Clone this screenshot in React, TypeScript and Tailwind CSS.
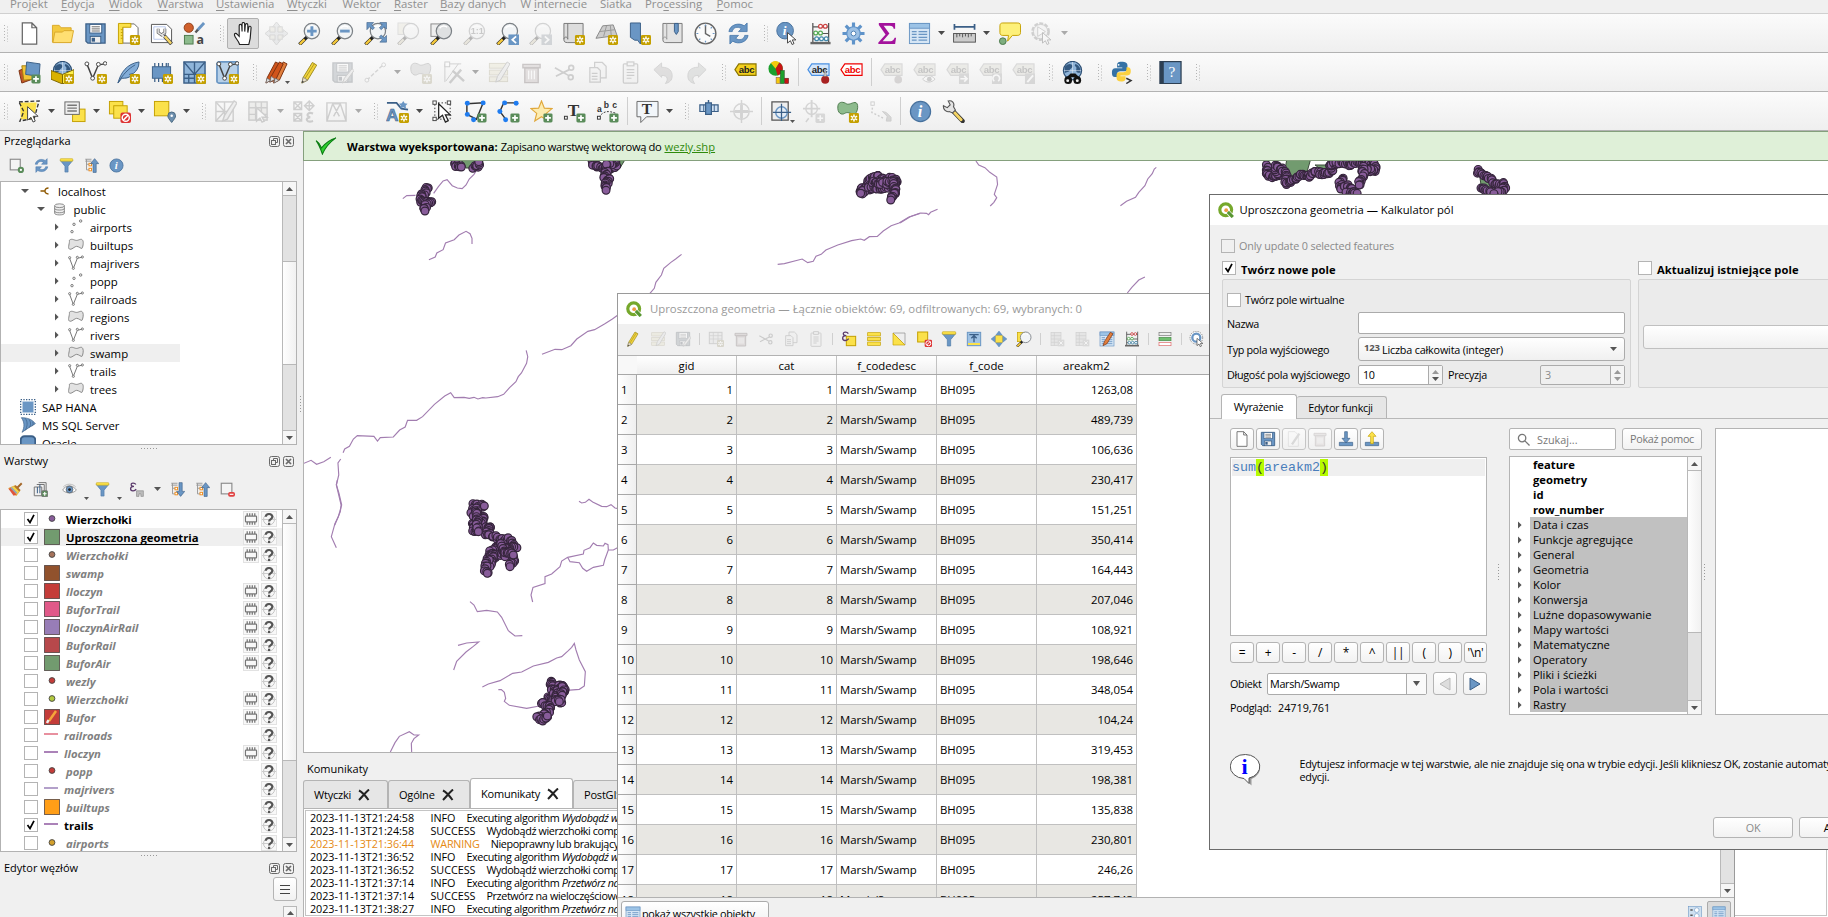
import React from 'react';

const B = '#6a96c4';
const DB = '#3b5f87';
const Y = '#fbe14a';
const DY = '#c4a000';

const Star = () => (
  <g>
    <rect x="13.5" y="13.5" width="10.5" height="10.5" rx="1.5" fill={DY} />
    <path d="M18.75 15v7.5M15.5 16.9l6.5 3.8M22 16.9l-6.5 3.8" stroke="#fff" strokeWidth="1.6" />
    <circle cx="18.75" cy="18.75" r="1" fill={DY} />
  </g>
);
const Plus = () => (
  <g>
    <rect x="14" y="14" width="9.5" height="9.5" rx="1.5" fill="#5a8c5a" />
    <path d="M18.75 15.8v6M15.8 18.75h6" stroke="#fff" strokeWidth="1.8" />
  </g>
);
const Lens = ({ fill = '#f1f4f6' }: { fill?: string }) => (
  <g>
    <path d="M1.500 23.500l8-8" stroke="#222" strokeWidth="3.6" />
    <path d="M1.900 23.100l5-5" stroke="#f5c93b" strokeWidth="2.4" />
    <circle cx="14.5" cy="9.5" r="8" fill={fill} stroke="#7b8085" strokeWidth="1.3" />
    <path d="M10 6.5c2-3 6-3 8-1" stroke="#fff" strokeWidth="1.5" fill="none" />
  </g>
);
const Cursor = () => <path d="M12 11v11l3-2.5 1.8 4 2-1-1.8-3.8h3.8z" fill="#fff" stroke="#444" strokeWidth="1" />;
const Pencil = ({ c = '#f2d43c', d = '#9d8a1d' }: { c?: string; d?: string }) => (
  <g>
    <path d="M4 23l1.500-6L15 1.500l4.500 2.800L10 20z" fill={c} stroke={d} />
    <path d="M4 23l1.500-6 4.500 3z" fill="#eadfc9" stroke="#777" strokeWidth=".8" />
    <path d="M4 23l.6-2.300 1.600 1z" fill="#333" />
    <path d="M7.500 18L17 2.800" stroke={d} strokeWidth=".8" />
  </g>
);
const Tag = ({ f, s, t }: { f: string; s: string; t: string }) => (
  <g>
    <path d="M1 9l4-6h18v12H5z" fill={f} stroke={s} strokeWidth="1.2" />
    <text x="5" y="12.300" fontSize="10" fontWeight="700" fontFamily="Liberation Sans, sans-serif" textLength="16.500" fill={t}>abc</text>
  </g>
);
const Rows = () => (
  <g fill={Y} stroke={DY}>
    <rect x="2.5" y="2.5" width="19" height="5" />
    <rect x="2.5" y="9.5" width="19" height="5" />
    <rect x="2.5" y="16.5" width="19" height="5" />
  </g>
);
const Trash = () => (
  <g fill="#d8a3a3" stroke="#8c5050" strokeWidth="1.4">
    <path d="M5 7h14v15.500H5z" />
    <path d="M3 3.500h18V7H3z" />
    <path d="M9 10v9M12 10v9M15 10v9" stroke="#fff" />
  </g>
);
const Disk = () => (
  <g>
    <path d="M2 2h20v20H4l-2-2z" fill={B} stroke={DB} strokeWidth="1.3" />
    <rect x="6" y="2.500" width="12.500" height="9" fill="#fff" stroke={DB} />
    <path d="M8 5h8.500M8 7.200h8.500M8 9.400h8.500" stroke="#666" strokeWidth="1" />
    <rect x="6.500" y="15" width="11" height="7" fill="#eee" stroke={DB} />
    <rect x="8" y="16.500" width="3.500" height="4" fill={DB} />
  </g>
);
const Globe = () => (
  <g>
    <circle cx="12" cy="10" r="9.5" fill="#8fb4d9" stroke="#2b4d72" strokeWidth="1.3" />
    <path d="M4 6c4-4 7-3 8-1s-3 3-3 5-4 1-5 3zM15 3c4 1 6 5 5 9-3 1-5-1-4-4s-3-2-1-5z" fill="#33587f" />
    <path d="M3 10h18M12 1v18" stroke="#dfe9f3" strokeWidth=".6" />
  </g>
);
const Refresh = () => (
  <g fill={B} stroke="#4273a8" strokeWidth=".8">
    <path d="M2 10C3 3 12 0 18 4l3-3v9h-9l3-3c-4-3-9-1-9.500 3z" />
    <path d="M22 14c-1 7-10 10-16 6l-3 3v-9h9l-3 3c4 3 9 1 9.500-3z" />
  </g>
);
const Funnel = () => (
  <g>
    <path d="M2 4h20l-7.500 9v9.500h-5V13z" fill={B} stroke="#4d7aa8" />
    <rect x="2" y="1" width="20" height="4" rx="1" fill={Y} stroke={DY} strokeWidth=".8" />
  </g>
);
const Abacus = () => (
  <g strokeWidth="1.300" fill="none">
    <path d="M4 1v20M20.500 1v20M4 5h16.500M4 12h16.500M4 17.500h16.500" stroke="#555" />
    <path d="M1.500 22h21" stroke="#666" strokeWidth="2.500" />
    <g fill="#fff" stroke="#c44">
      <circle cx="12" cy="4.500" r="2" /><circle cx="17" cy="4.500" r="2" />
    </g>
    <g fill="#fff" stroke="#5a5"><circle cx="7" cy="11.500" r="2" /><circle cx="12" cy="11.500" r="2" /></g>
    <g fill="#fff" stroke="#48a"><circle cx="8" cy="17.500" r="2" /><circle cx="13" cy="17.500" r="2" /><circle cx="18" cy="17.500" r="2" /></g>
  </g>
);
const Info = () => (
  <g>
    <circle cx="12" cy="12" r="10.500" fill={B} stroke="#47719d" strokeWidth="1.300" />
    <text x="9" y="18" fontSize="17" fontStyle="italic" fontWeight="700" fontFamily="Liberation Serif, serif" fill="#fff">i</text>
  </g>
);
const Clip = () => (
  <g fill="#eee" stroke="#777" strokeWidth="1.300">
    <rect x="4.500" y="3" width="15" height="20" rx="1" /><rect x="8.500" y="1" width="7" height="4" />
    <path d="M8 9h8M8 12h8M8 15h8M8 18h5" />
  </g>
);
const Copy = () => (
  <g fill="#eee" stroke="#777" strokeWidth="1.300">
    <path d="M9 1.500h8l4 4v12H9z" /><path d="M4 7h8l3 3v12H4z" /><path d="M6 13h6M6 16h6M6 19h6" />
  </g>
);
const Scissors = () => (
  <g fill="none" stroke="#777" strokeWidth="1.800">
    <path d="M2 7l14 8M3 16L17 9" /><circle cx="19" cy="7" r="2.500" /><circle cx="18.500" cy="17" r="2.500" />
  </g>
);
const Poly = () => (
  <path d="M2 6c1-5 6-4 9-2s9-4 11 0-1 12-4 11-6-3-9-1-8 0-7-8z" />
);
const Expr = () => <path d="M11 4C9 .500 3 1 3.500 4.500c.3 2 2.500 2.500 4.500 2.500-3 0-5.500 1-5.500 3.800C2.500 15 9 15.500 11.500 11.500" fill="none" stroke="#5b3a6b" strokeWidth="2" />;
const NoEntry = () => (
  <g><rect x="13" y="13" width="11" height="11" rx="2" fill="#d33" /><circle cx="18.500" cy="18.500" r="3.700" fill="none" stroke="#fff" strokeWidth="1.500" /><path d="M16 21l5-5" stroke="#fff" strokeWidth="1.500" /></g>
);
const VLine = () => (
  <g>
    <path d="M3 3l6 15 6-14 7-1" fill="none" stroke="#444" strokeWidth="1.500" />
    <g fill="#fff" stroke="#444"><circle cx="3" cy="3" r="2" /><circle cx="9" cy="18" r="2" /><circle cx="15" cy="3.500" r="2" /><circle cx="22" cy="2.500" r="1.800" /></g>
  </g>
);
const Table = () => (
  <g fill="#d6e6f5" stroke={B}>
    <rect x="1.500" y="1.500" width="21" height="21" /><rect x="1.500" y="1.500" width="21" height="5" fill="#9cc3e6" />
    <path d="M4 10h5M4 13h5M4 16h5M4 19h5M11 10h9M11 13h9M11 16h9M11 19h9" strokeWidth="1.300" />
  </g>
);
const TreeGlyph = () => (
  <g fill="none" strokeWidth="1.500">
    <path d="M2 2h10M4 2v17h5M4 10h5M2 5h10" stroke="#999" />
    <rect x="8" y="8.500" width="4" height="4" stroke="#f08c1a" fill="#fff" /><rect x="8" y="16.500" width="4" height="4" stroke="#f08c1a" fill="#fff" />
  </g>
);

const icons: Record<string, React.ReactNode> = {
  new: <path d="M4.500 1h10l5 5v17h-15zM14.500 1v5h5" fill="#fff" stroke="#666" strokeWidth="1.300" />,
  open: <g stroke="#d9a92c" strokeWidth="1"><path d="M1.500 3.500h7l2 2.500h10.500V21H1.500z" fill="#f3c93f" /><path d="M2 21.500L4 10.500h8l1.500-1.500H23.500L21 21.500z" fill="#ffdf72" /></g>,
  save: <Disk />,
  layout: <g><path d="M6 2h12l4 4v16H6z" fill="#fff" stroke="#666" /><path d="M1.500 1.500h13v4H6v17H1.500z" fill={Y} stroke={DY} /><path d="M4 8h2M4 11h2M4 14h2M4 17h2" stroke={DY} /><Star /></g>,
  layoutmgr: <g><path d="M1.500 2.500h16l5 5v14h-21z" fill="#fff" stroke="#555" /><path d="M4 5h12v13H4z" fill="none" stroke="#b8c8ec" /><path d="M14.500 14l8 9" stroke="#444" strokeWidth="4" /><path d="M15.500 15l6.500 7.500" stroke="#f5d565" strokeWidth="2.500" /><path d="M8.500 7v4l3.500 2.500 3.500-2.500V7" fill="none" stroke="#666" strokeWidth="3" /><path d="M8.500 7v4l3.500 2.500 3.500-2.500V7M12 13l3 3" fill="none" stroke="#e4e4e4" strokeWidth="1.500" /></g>,
  style: <g><circle cx="6" cy="6" r="4.800" fill="#d0602c" stroke="#8f3c15" /><rect x="1.500" y="14" width="9" height="9" fill="#8dbb8d" stroke="#4d7a4d" /><path d="M15 8.500l7-7.500" stroke={B} strokeWidth="3" /><path d="M13 11l2.500-3" stroke="#555" strokeWidth="2.500" /><text x="14" y="22.500" fontSize="13" fontWeight="700" fontFamily="Noto Sans, sans-serif" fill="#444">a</text></g>,
  hand: <path d="M8 23.500c-1-4-5-7-5.500-10 0-2 2-2 3-.500L7.500 15V4c0-2 2.500-2 2.700 0l.3 6V2c0-2 2.600-2 2.700 0l.1 8 .6-7c.2-2 2.600-1.700 2.600.2V11l1-5.500c.4-1.800 2.500-1.200 2.400.5L19 17l-1.500 6.500z" fill="#fff" stroke="#222" strokeWidth="1.200" />,
  pansel: <g stroke="#999"><rect x="5" y="5" width="13" height="13" fill="#e8dc9a" /><path d="M12 0l4 5h-2.500v5.500H19V8l5 4-5 4v-2.500h-5.500V19H16l-4 5-4-5h2.500v-5.500H5V16l-5-4 5-4v2.500h5.500V5H8z" fill="#c8d4e0" /></g>,
  zin: <g><Lens /><path d="M14.500 4.500v10M9.500 9.500h10" stroke={B} strokeWidth="3" /></g>,
  zout: <g><Lens /><path d="M9.500 9.500h10" stroke={B} strokeWidth="3" /></g>,
  zfull: <g><Lens /><g fill={B} stroke={DB} strokeWidth=".6"><path d="M3 .500h7L8 3l3 3-2 2-3-3-3 3zM23.500.500v7L21 5l-3 3-2-2 3-3-2.500-2.500zM23.500 21h-7l2.500-2.500-3-3 2-2 3 3 2.500-2.500z" /></g></g>,
  zsel: <g><rect x="1" y="1" width="12" height="12" fill="#f1e28b" stroke="#aaa" /><Lens /></g>,
  zlayer: <g><rect x="1" y="2" width="12" height="13" fill="#eee" stroke="#888" /><Lens fill="#dfe1e2" /></g>,
  znat: <g><Lens /><text x="8" y="13" fontSize="9.500" fontWeight="700" fontFamily="Liberation Sans, sans-serif" fill="#666">1:1</text></g>,
  zlast: <g><Lens /><rect x="13" y="13" width="11" height="11" fill={B} /><path d="M21 15l-4 3.500 4 3.500" stroke="#fff" strokeWidth="1.800" fill="none" /></g>,
  znext: <g><Lens /><rect x="13" y="13" width="11" height="11" fill={B} /><path d="M16.500 15l4 3.500-4 3.500" stroke="#fff" strokeWidth="1.800" fill="none" /></g>,
  mapview: <g><path d="M2 1.500h20v20H6c-3 0-4-1-4-3z" fill="#ddd" stroke="#777" /><path d="M2 18c0-3 4-3 4 0V1.500" fill="none" stroke="#777" /><Star /></g>,
  map3d: <g><path d="M8 4l11-1 4 11L1 17z" fill="#ccc" stroke="#888" /><path d="M5 10l16-2M12 4L9 15M16 3.500l1 11" stroke="#999" fill="none" /><Star /></g>,
  bookmarknew: <g><path d="M2.500 1h10.500v22l-3-4H7l-4.500-3z" fill={B} stroke={DB} /><Star /></g>,
  bookmark: <g><path d="M2 1.500h20v20H5c-2 0-3-1-3-3z" fill="#e3e3e3" stroke="#777" /><path d="M2 18c0-3 4-3 4 0V1.500" fill="none" stroke="#999" /><path d="M14 1.500h4V10l-2 3-2-3z" fill={B} stroke={DB} /></g>,
  clock: <g><circle cx="12" cy="12" r="10.800" fill="#fbfbfb" stroke="#666" strokeWidth="1.500" /><path d="M12 3v9l5 3" stroke="#666" strokeWidth="1.500" fill="none" /><path d="M12 2.500v2M12 19.500v2M2.500 12h2M19.500 12h2M5.300 5.300l1.300 1.300M17.400 17.400l1.300 1.300M5.300 18.700l1.300-1.300M17.400 6.600l1.300-1.300" stroke={B} strokeWidth="1.300" /></g>,
  refresh: <Refresh />,
  identify: <g><circle cx="9.500" cy="9" r="8.700" fill={B} stroke="#47719d" /><text x="7" y="14" fontSize="14" fontStyle="italic" fontWeight="700" fontFamily="Liberation Serif, serif" fill="#fff">i</text><Cursor /></g>,
  abacus: <Abacus />,
  gear: <g><g stroke="#5f93c9" strokeWidth="3.300"><path d="M12 .500v23M.500 12h23M3.900 3.900l16.200 16.200M20.100 3.900L3.900 20.100" /></g><circle cx="12" cy="12" r="7" fill="#9cc0e4" stroke="#5f93c9" strokeWidth="1.200" /><circle cx="12" cy="12" r="2.500" fill="#fff" stroke="#4d7fb3" /></g>,
  sum: <path d="M4 1h17v6h-1.500c-.5-2-1.500-3-4-3H9l6 8-7 8h8c2.500 0 3.500-1 4.500-3.500H22L21 23H3.500v-1.500L11 13 4 3z" fill="#a3129c" />,
  table: <Table />,
  ruler: <g><path d="M1 5h22M1.500 2v6M22.500 2v6" stroke={DB} strokeWidth="1.800" /><rect x=".600" y="12" width="22.800" height="9" fill="#ccc" stroke="#555" /><path d="M4 12v4M7 12v3M10 12v4M13 12v3M16 12v4M19 12v3" stroke="#555" /></g>,
  tip: <g><path d="M5 1h15c3 0 3.500 1 3.500 3v7c0 2-1 3-3.500 3h-5l-5 6 1-6H5c-2 0-3-1-3-3V4c0-2 1-3 3-3z" fill="#fdf07a" stroke={DY} /><circle cx="5" cy="20" r="3.500" fill="#7fae7f" stroke="#4d7a4d" /></g>,
  action: <g><circle cx="10" cy="10" r="8.500" fill="#ddd" stroke="#777" strokeWidth="2.500" strokeDasharray="4 1.500" /><circle cx="10" cy="10" r="7.500" fill="#eee" stroke="#777" /><path d="M7 5l8 5-8 5z" fill="#fff" stroke="#777" /><Cursor /></g>,

  dsm: <g><path d="M1 10l10-4 4 13-11 4z" fill="#c4572a" stroke="#7a3010" /><path d="M4 5h12v14l-10 1z" fill="#f2c437" stroke="#a6800b" /><path d="M9 1l14 2-1 13-14-2z" fill={B} stroke={DB} /><Plus /></g>,
  geopkg: <g><Globe /><path d="M0 10l12 4v10L0 19z" fill="#d9b100" stroke="#7d6600" /><path d="M12 14l12-5v9l-12 6z" fill="#fff04a" stroke="#7d6600" /><Star /></g>,
  shp: <g><VLine /><Star /></g>,
  feather: <g><path d="M1 23C4 12 10 3 23 1c0 6-3 10-6 12l-4 1 2 1c-3 3-6 3-10 3z" fill="#83add8" stroke={DB} /><path d="M1 23C6 14 12 8 19 4" stroke={DB} fill="none" /><Star /></g>,
  chip: <g><rect x="2.500" y="6" width="19" height="12" fill={B} stroke={DB} /><path d="M5 2v4M9 2v4M13 2v4M17 2v4M5 18v4M9 18v4M13 18v4M19 2v4" stroke={DB} strokeWidth="1.300" /><Star /></g>,
  mesh: <g><rect x="1" y="1" width="22" height="22" fill="#8fb5da" stroke={DB} strokeWidth="1.500" /><path d="M1 14h22M12 1v22M1 1l11 13M23 1L12 14M6 14v9M1 18h11" stroke={DB} strokeWidth="1.400" /><Star /></g>,
  gpx: <g><rect x="1" y="1" width="22" height="22" rx="2" fill="#b7d0e8" stroke={B} strokeWidth="1.800" /><VLine /><Star /></g>,
  edits: <g><path d="M1 23l1.500-6L11 1l4 2-7 16z" fill="#d0541b" stroke="#7a3010" /><path d="M9 23l1.500-6L19 1l4 2-8 17z" fill="#e07e3c" stroke="#7a3010" /><path d="M5 22l1.500-6L15 1l4 2-8 17z" fill="#d0541b" stroke="#7a3010" /><path d="M5 22l1.500-6 4 3zM1 23l1-5 4 2zM9.500 23l1-5 4 2z" fill="#ddd" stroke="#666" strokeWidth=".7" /></g>,
  pencil: <Pencil />,
  saveedit: <g><Disk /><path d="M12 23l2-5 8-10 2 2-8 11z" fill="#ddd" stroke="#777" /></g>,
  seg: <g><path d="M3 20L20 4" stroke="#888" strokeWidth="1.500" strokeDasharray="4 2" /><circle cx="3" cy="20" r="2" fill="#fff" stroke="#888" /><circle cx="20.500" cy="4" r="2" fill="#fff" stroke="#888" /></g>,
  addpoly: <g><g fill="#bbb" stroke="#777"><Poly /></g><Star /></g>,
  vertex: <g><path d="M3 22V3h17M4 21L17 3" stroke="#777" fill="none" /><rect x="3" y="1" width="5" height="5" fill="#fff" stroke="#777" /><path d="M8 23L20 9M11 10l12 11" stroke="#777" strokeWidth="2.500" /></g>,
  multiedit: <g><Rows /><path d="M9 22l2-6L21 1l3 2-10 17z" fill="#ddd" stroke="#777" /></g>,
  trash: <Trash />,
  cut: <Scissors />,
  copy: <Copy />,
  paste: <Clip />,
  undo: <path d="M2 9l8-7v4.500c8 0 11 4 11 9s-3 7-7 8c3-4 3-8.500-4-8.500V17z" fill="#b9a9a9" stroke="#888" />,
  redo: <path d="M22 9l-8-7v4.500c-8 0-11 4-11 9s3 7 7 8c-3-4-3-8.500 4-8.500V17z" fill="#a9b9b0" stroke="#888" />,
  label: <Tag f="#f3d01d" s="#8a7400" t="#222" />,
  diagram: <g><circle cx="9" cy="8" r="7.500" fill="#1ca02c" /><path d="M9 8L4 2a7.500 7.500 0 0 1 9-.600z" fill="#f5c90c" /><path d="M9 8l4-6.500A7.500 7.500 0 0 1 11 15z" fill="#c81414" /><rect x="9.500" y="17" width="4" height="6.500" fill="#f5c90c" stroke="#865" strokeWidth=".6" /><rect x="14" y="10" width="4" height="13.500" fill="#1ca02c" stroke="#252" strokeWidth=".6" /><rect x="18.500" y="18" width="4" height="5.500" fill="#c81414" stroke="#522" strokeWidth=".6" /></g>,
  pin: <g><Tag f="#d4e6fa" s="#4a90e2" t="#222" /><circle cx="19" cy="19.500" r="4.200" fill="#a82222" /><path d="M19 8l-1.500 8h3z" fill="#ccc" stroke="#777" strokeWidth=".5" /></g>,
  redlabel: <Tag f="#fff" s="#e00" t="#e00" />,
  lpin: <g><Tag f="#d9d29c" s="#999" t="#555" /><circle cx="19" cy="19.500" r="4" fill="#a88" /></g>,
  leye: <g><Tag f="#d9d29c" s="#999" t="#555" /><path d="M10 19c4-5 9-5 13 0-4 4-9 4-13 0z" fill="#fff" stroke="#777" /><circle cx="17" cy="19" r="2.500" fill="#777" /></g>,
  lmove: <g><Tag f="#d9d29c" s="#999" t="#555" /><rect x="13.500" y="13" width="10.500" height="11" fill="#999" /><path d="M15 18.500h6M19 15.500l3 3-3 3" stroke="#fff" strokeWidth="1.700" fill="none" /></g>,
  lrot: <g><Tag f="#d9d29c" s="#999" t="#555" /><rect x="13.500" y="13" width="10.500" height="11" fill="#999" /><path d="M16 21a3.500 3.500 0 1 1 4 0" stroke="#fff" strokeWidth="1.700" fill="none" /></g>,
  ledit: <g><Tag f="#d9d29c" s="#999" t="#555" /><rect x="13.500" y="13" width="10.500" height="11" fill="#999" /><path d="M16 22l6-7" stroke="#fff" strokeWidth="2" fill="none" /></g>,
  meta: <g><Globe /><g fill="#111"><circle cx="7.500" cy="20" r="4" /><circle cx="17" cy="20" r="4" /><path d="M6 17l4-4h5l4 4z" /></g><circle cx="7" cy="20.500" r="1.500" fill="#eee" /><circle cx="17" cy="20.500" r="1.500" fill="#eee" /></g>,
  python: <g><path d="M11 1c-4 0-5 1.500-5 4v2.500h6v1H4c-3 0-4 2-4 5s1 5 3.500 5H6v-3c0-2 1.500-3.500 4-3.500h5c2 0 3-1.500 3-3.500V5c0-2.500-2-4-7-4z" fill="#3572a5" transform="translate(2 0) scale(.9)" /><path d="M12 22c4 0 5-1.500 5-4v-2h-6v-1h8c3 0 4-2 4-5s-1-4.500-3.500-4.500H18V8c0 2-1.500 3.500-4 3.500H9.500c-2 0-3 1.500-3 3.500v3c0 2.500 1.500 4 5.500 4z" fill="#fbd03f" transform="translate(1 1.500) scale(.9)" /><circle cx="9" cy="4" r="1" fill="#fff" /><path d="M17 18l5 2.500-5 3" fill="none" stroke="#333" strokeWidth="1.500" /></g>,
  help: <g><rect x="1" y="0.600" width="22" height="23" fill={B} stroke="#2d3f52" strokeWidth="1.300" /><rect x="1" y=".600" width="4" height="23" fill="#2d3f52" /><text x="10" y="17" fontSize="16" fontFamily="Liberation Serif, serif" fill="#fff">?</text></g>,

  selfeat: <g><path d="M2 2.500h17.500L17 20H3z" fill={Y} /><path d="M1 2l21-1-5 18-15 3L6 12z" fill="none" stroke="#333" strokeWidth="1.400" strokeDasharray="4 2" /><path d="M10 7v14l3.500-3 2.200 5 2.300-1-2.200-5H21z" fill="#fff" stroke="#444" /></g>,
  selval: <g><rect x="10" y="9.500" width="13" height="13" fill={Y} stroke={DY} /><rect x="2" y="2" width="15" height="13" fill="#eee" stroke="#666" /><path d="M4.500 5.500h10M4.500 8.500h10M4.500 11.500h10" stroke="#777" strokeWidth="1.500" /></g>,
  desel: <g><rect x="1.500" y="1.500" width="14" height="13" fill={Y} stroke={DY} /><rect x="6" y="6" width="14" height="13" fill={Y} stroke={DY} /><NoEntry /></g>,
  deselone: <g><rect x="2.500" y="1.500" width="15" height="15" fill={Y} stroke={DY} strokeWidth="1.500" /><NoEntry /></g>,
  selloc: <g><rect x="1.500" y="1.500" width="15" height="15" fill={Y} stroke={DY} /><path d="M19.500 23.500c-3-4-4-5-4-7a4 4 0 0 1 8 0c0 2-1 3-4 7z" fill="#6d8fae" stroke="#48677f" /><circle cx="19.500" cy="16.500" r="1.300" fill="#fff" /></g>,
  meshedit: <g fill="none" stroke="#777" strokeWidth="1.500"><rect x="2" y="2" width="18" height="20" /><path d="M2 12h18M11 2v20M2 2l9 10M11 12L2 22" /><path d="M9 22l2-6L21 1l3 2-10 17z" fill="#ddd" /></g>,
  meshsel: <g fill="none" stroke="#777" strokeWidth="1.500"><rect x="2" y="2" width="19" height="19" fill="#ddd8c0" /><path d="M2 8h19M2 15h19M9 2v19M15 2v19" /><path d="M10 8v14l3.500-3 2.200 4 2.300-1-2.200-4H21z" fill="#fff" /></g>,
  meshx: <g fill="none" stroke="#777" strokeWidth="1.500"><path d="M2 2h8v8H2zM2 2l8 8M10 2l-8 8M2 14h8v8H2zM2 14l8 8M10 14l-8 8M18 1l5 5-5 5-5-5zM13 6h10M18 1v10" /><path d="M22 14c-6-2-8 3-3 4-6 1-4 6 3 4" strokeWidth="2.200" /></g>,
  meshf: <g fill="none" stroke="#777" strokeWidth="1.500"><path d="M2 3h20v19H2zM2 22L8 4h8l6 18M8 4l7 13M16 4L9 17" /></g>,
  annol: <g><path d="M1 3h10l5 6 7 1" stroke={DB} strokeWidth="1.800" fill="none" /><path d="M18 1l1.500 2.500 3 .5-2 2 .5 3-3-1.500-3 1.500.5-3-2-2 3-.5z" fill={B} /><text x="0" y="22" fontSize="18" fontWeight="700" fontFamily="Liberation Sans, sans-serif" fill={B} stroke={DB} strokeWidth=".6">A</text><Star /></g>,
  annosel: <g><rect x="4" y="3" width="16" height="17" fill="none" stroke="#333" strokeDasharray="1.500 2" /><g fill="#fff" stroke="#444"><rect x="2" y="1" width="3.500" height="3.500" /><rect x="17" y="1" width="3.500" height="3.500" /><rect x="2" y="18" width="3.500" height="3.500" /></g><path d="M8 4v15l4-3 3 7 3-1.500-3-6h5z" fill="#fff" stroke="#222" strokeWidth="1.300" /></g>,
  annopoly: <g><path d="M3 4l17-1-7 17-10-5z" fill="none" stroke="#333" strokeWidth="1.500" /><g fill="#1f7cf0"><circle cx="3.500" cy="3.500" r="2.600" /><circle cx="20" cy="3" r="2.600" /><circle cx="3.500" cy="15" r="2.600" /><circle cx="10" cy="20.500" r="2.600" /></g><Plus /></g>,
  annoline: <g><path d="M20 3L7 3 3 12l6 8" fill="none" stroke="#333" strokeWidth="1.500" /><g fill="#1f7cf0"><circle cx="20" cy="3.500" r="2.600" /><circle cx="8" cy="3" r="2.600" /><circle cx="3" cy="12" r="2.600" /><circle cx="9" cy="20.500" r="2.600" /></g><Plus /></g>,
  annostar: <g><path d="M12 1l3 7.500 8 .500-6 5 2 8-7-4.500L5 22l2-8-6-5 8-.500z" fill="#fdecb0" stroke="#e0a83c" strokeWidth="1.200" /><Plus /></g>,
  annotext: <g><text x="5" y="17" fontSize="18" fontFamily="Liberation Serif, serif" fontWeight="700" fill="#333">T</text><rect x="1.500" y="17" width="3" height="3" fill="none" stroke="#333" /><Plus /></g>,
  annoabc: <g><g fontSize="9" fontWeight="700" fontFamily="Liberation Sans, sans-serif" fill="#333"><text x="1" y="12">a</text><text x="8" y="8">b</text><text x="17" y="8">c</text></g><path d="M3 18c5-7 10-7 18-4" fill="none" stroke="#333" strokeDasharray="2 1.500" /><rect x="1.500" y="17" width="3" height="3" fill="#fff" stroke="#333" /><Plus /></g>,
  textann: <g><path d="M1 1.500h22v16H11l-6 6v-6H1z" fill="#f2f6fa" stroke="#666" /><text x="6" y="15" fontSize="16" fontFamily="Liberation Serif, serif" fontWeight="700" fill="#333">T</text></g>,
  gps: <g transform="translate(1 -3)"><path d="M2 8h19v7H2z" fill="#cfe0f2" stroke={DB} strokeWidth="1.300" /><path d="M6 8v7M17 8v7" stroke={DB} /><rect x="8" y="6" width="6" height="12" fill={B} stroke={DB} strokeWidth="1.300" /><path d="M11 3v3" stroke={DB} strokeWidth="1.500" /></g>,
  gpsc: <g fill="none" stroke="#888" strokeWidth="1.500"><circle cx="12" cy="12" r="8" /><path d="M12 0v24M0 12h24" /><path d="M12 5v14M5 12h14" strokeWidth="3" /></g>,
  gpsmap: <g><path d="M2 2h17v19H2z" fill="#eee" stroke="#555" strokeWidth="1.300" /><g fill="none" strokeWidth="1.500"><circle cx="12" cy="13" r="6" fill="#e4edf6" stroke={B} /><path d="M12 4v18M3 13h19" stroke={DB} strokeWidth="1.300" /></g></g>,
  gpsadd: <g><g fill="none" stroke="#888" strokeWidth="1.500"><circle cx="9" cy="9" r="6" /><path d="M9 0v18M0 9h18" strokeWidth="2" /><path d="M3 23l3-4" /></g><rect x="13" y="14" width="10" height="10" rx="1.500" fill="#999" /><path d="M18 16v6M15 19h6" stroke="#fff" strokeWidth="1.600" /></g>,
  gpspoly: <g><g fill="#8dbb8d" stroke="#4d7a4d"><Poly /></g><Star /></g>,
  gpsdash: <g><path d="M4 4l-1 9 12 6" fill="none" stroke="#777" strokeWidth="1.500" strokeDasharray="2 2" /><rect x="2" y="2" width="3.500" height="3.500" fill="#fff" stroke="#777" /><path d="M14 12l5 5-1 5h5v-4l-5-5z" fill="#998" stroke="#777" /></g>,
  info: <Info />,
  wrench: <g><path d="M12 12l9.500 10" stroke="#333" strokeWidth="4.500" strokeLinecap="round" /><path d="M13 13l7 7.500" stroke="#f5d565" strokeWidth="3" strokeLinecap="round" /><path d="M1.500 6l4 2 3-3-2-4c4-1 7 2 5.500 6l2 3.500-3 3L7.500 12c-3 1-6.500-2-6-6z" fill="#e4e4e4" stroke="#555" strokeWidth="1.200" /></g>,

  addlayer: <g><rect x="2" y="2" width="16" height="17" fill="#f4f4f4" stroke="#888" strokeWidth="1.800" /><circle cx="19" cy="19" r="5" fill="#5a8c5a" /><circle cx="19" cy="19" r="1.800" fill="#fff" /></g>,
  filter: <Funnel />,
  collapse: <g><TreeGlyph /><path d="M17 1l6.500 8h-4v14h-5V9h-4z" fill={B} stroke={DB} /></g>,
  expand: <g><TreeGlyph /><path d="M17 23l6.500-8h-4V1h-5v14h-4z" fill={B} stroke={DB} /></g>,
  broom: <g><path d="M14 10L22 2" stroke="#a5682a" strokeWidth="3" /><path d="M1 10l10-4 8 8-6 8z" fill="#f5d545" stroke="#d9972a" /><path d="M1 11l8 11 5-2L4 9z" fill="#e0553c" /><path d="M5 9l9 9" stroke="#88a4c4" strokeWidth="2.500" /><path d="M11 6l8 8" stroke="#b5722a" strokeWidth="3" /></g>,
  addgroup: <g fill="none" stroke="#777" strokeWidth="1.600"><path d="M2 8h12v14H2zM6 4h12v14M9 1h12v14" /><path d="M11 4v14M7 8v10" stroke={DB} /><Plus /></g>,
  eye: <g><path d="M1 13C6 4 17 4 23 13c-6 6-16 6-22 0z" fill="#fff" stroke="#999" strokeWidth="1.500" /><circle cx="12" cy="12" r="5.500" fill={B} stroke="#555" /><circle cx="12" cy="12" r="2.200" fill="#222" /><path d="M2 8C7 2 17 2 22 8" stroke="#bbb" strokeWidth="1.500" fill="none" /></g>,
  epsf: <g><Expr /><path d="M12 23v-9h11v9h-4v-4h-3v4z" fill="#bbb" stroke="#888" /></g>,
  remove: <g><rect x="2" y="2" width="17" height="17" fill="#f4f4f4" stroke="#888" strokeWidth="1.800" /><rect x="13" y="16" width="11" height="7.500" rx="3" fill="#e04040" /><path d="M15.500 19.700h6" stroke="#fff" strokeWidth="1.800" /></g>,

  selexpr: <g><rect x="8" y="8" width="14" height="14" fill={Y} stroke={DY} strokeWidth="1.500" /><Expr /></g>,
  rows: <Rows />,
  invert: <g><path d="M3 3h18v18z" fill="#eee" stroke="#888" /><path d="M3 3v18h18z" fill={Y} stroke={DY} /></g>,
  movetop: <g><rect x="2" y="2" width="20" height="20" fill="#9fc2e4" stroke={B} strokeWidth="1.500" /><path d="M3 19.500h18" stroke={Y} strokeWidth="3" /><path d="M5 5.500h14M12 8v9M8 11l4-4 4 4" stroke={DB} strokeWidth="2" fill="none" /></g>,
  panrow: <g><rect x="7" y="7" width="10" height="10" fill={Y} stroke={DY} /><path d="M12 1l3.500 4.500h-7zM12 23l3.500-4.500h-7zM1 12l4.500-3.500v7zM23 12l-4.500-3.500v7z" fill={B} stroke={B} strokeWidth="2" /></g>,
  zoomrow: <g><rect x="2" y="2" width="11" height="14" fill={Y} stroke={DY} /><Lens /></g>,
  newrow: <g><rect x="2" y="2" width="19" height="17" fill="#ddd" stroke="#888" strokeWidth="1.500" /><path d="M2 7h19M2 12h19M8 2v17M15 2v17" stroke="#888" /><Star /></g>,
  col: <g><rect x="3" y="2" width="15" height="20" fill="#ccc" stroke="#888" /><path d="M3 7h15M8 2v20M3 12h15M3 17h15" stroke="#888" /><rect x="13" y="13" width="10" height="10" fill="#aaa" /><path d="M15.500 15.500l5 5M20.500 15.500l-5 5" stroke="#fff" strokeWidth="1.500" /></g>,
  calcedit: <g><Table /><path d="M6 22l2-6L17 2l4 2L12 19z" fill="#e07e3c" stroke="#7a3010" /></g>,
  cond: <g><rect x="3" y="2" width="18" height="5" fill="#eee" stroke="#777" /><rect x="3" y="9.500" width="18" height="5" fill="#6fbf6f" stroke="#4a8a4a" /><rect x="3" y="17" width="18" height="5" fill="#fff" stroke="#d66" /></g>,
  dock: <g><circle cx="11" cy="10" r="9.500" fill="#fff" stroke="#888" strokeWidth="1.500" strokeDasharray="2 1.500" /><circle cx="11" cy="10" r="6" fill="#fff" stroke={B} strokeWidth="3.500" /><Cursor /></g>,
  load: <g><path d="M2 17h20v5H2z" fill={B} stroke={DB} /><path d="M12 18l-6-7h4V1h4v10h4z" fill={B} stroke={DB} /></g>,
  export: <g><path d="M2 17h20v5H2z" fill={B} stroke={DB} /><path d="M12 1l6 7h-4v11h-4V8H6z" fill={Y} stroke={DY} /></g>,
  editfn: <g><path d="M3.500 1h10l5 5v17h-15z" fill="#fff" stroke="#777" /><path d="M9 20L20 4" stroke="#777" strokeWidth="3.500" /></g>,
  form: <g><rect x="1" y="1" width="22" height="22" fill="#cfe0f0" stroke={B} /><path d="M4 7h4M4 16h4" stroke="#555" strokeWidth="2.500" /><g fill="#fff" stroke={B}><circle cx="15" cy="7" r="4" /><circle cx="15" cy="17" r="4" /></g></g>,

  pts: <g fill="#fff" stroke="#777" strokeWidth="1.500"><circle cx="9" cy="8" r="1.800" /><circle cx="19" cy="3" r="1.800" /><circle cx="6" cy="19" r="1.800" /></g>,
  line: <g fill="none" stroke="#777" strokeWidth="1.500"><path d="M2 4l6 16 6-15 8-2" /><g fill="#fff"><circle cx="2.500" cy="4" r="1.600" /><circle cx="8" cy="20" r="1.600" /><circle cx="14" cy="3.500" r="1.600" /><circle cx="21.500" cy="3" r="1.600" /></g></g>,
  poly: <g fill="#e2e2e2" stroke="#8a8a8a" strokeWidth="1.500"><path d="M2 5c4-4 8 1 12 0s6-3 8 0 0 11-1 12-5-3-8-3-8 6-11 4 1-9 0-13z" /></g>,
  db: <g fill="#eee" stroke="#777" strokeWidth="1.500"><path d="M3 5v14c0 4 18 4 18 0V5" /><ellipse cx="12" cy="5" rx="9" ry="3.500" /><path d="M3 10c0 4 18 4 18 0M3 15c0 4 18 4 18 0" fill="none" /></g>,
  conn: <path d="M0 12h12M24 3c-13 0-15 18 0 18" fill="none" stroke="#8f5902" strokeWidth="4" />,
  hana: <g><rect x="4" y="4" width="16" height="16" fill={B} stroke="#aac4de" /><rect x="1" y="1" width="22" height="22" fill="none" stroke={DB} strokeWidth="2" strokeDasharray="2 2" /></g>,
  mssql: <g><path d="M2 1c8 0 16 2 21 9-5 3-13 8-20 13C7 15 7 8 2 1z" fill={B} stroke={DB} /><path d="M8 2c4 6 3 12 0 18M14 4c3 5 2 9 0 12M19 7c1 3 1 5-1 7" fill="none" stroke={DB} /></g>,
  oracle: <rect x="1" y="2" width="22" height="22" rx="6" fill={B} stroke={DB} strokeWidth="3" />,
  mem: <g fill="none" stroke="#777" strokeWidth="2"><rect x="2.500" y="7" width="19" height="10" rx="1" /><path d="M5.500 7V2M9.800 7V2M14.200 7V2M18.500 7V2M5.500 17v5M9.800 17v5M14.200 17v5M18.500 17v5" strokeWidth="2.200" /></g>,
};

function Icon({ n, s = 'size-6', dim }: { n: string; s?: string; dim?: boolean }) {
  return (
    <svg viewBox="0 0 24 24" className={`${s} shrink-0 ${dim ? 'opacity-30 grayscale-[.8]' : ''}`}>
      {icons[n]}
    </svg>
  );
}

function Tri({ dir = 'down', c = '#555', s = 'w-2 h-[5px]' }: { dir?: string; c?: string; s?: string }) {
  if (dir === 'right')
    return (
      <svg viewBox="0 0 5 9" className="h-2 w-1 shrink-0"><path d="M0 0l4.500 4.500L0 9z" fill={c} /></svg>
    );
  return (
    <svg viewBox="0 0 10 6" preserveAspectRatio="none" className={`${s} shrink-0`}><path d={dir === 'up' ? 'M0 6h10L5 0z' : 'M0 0h10L5 6z'} fill={c} /></svg>
  );
}

const Handle = ({ w = 'w-4 pl-1.5' }: { w?: string }) => (
  <div className={`${w} flex shrink-0 items-center justify-center`}>
    <svg viewBox="0 0 4 17" className="h-[17px] w-1"><path d="M.500 0v17M3.500 1.500v15.500" stroke="#b5b5b5" strokeDasharray="1 2" /></svg>
  </div>
);

/* Toolbar tokens: "|" handle, "/" separator, "v" drop-down arrow, "-name" disabled, "*name" pressed, "name." small arrow */
function Toolbar({ items }: { items: string }) {
  return (
    <div className="flex h-[39px] shrink-0 items-stretch border-b border-[#b2b2b2] bg-linear-to-b from-[#fbfbfb] to-[#efefef]">
      <Handle w="w-[12.500px]" />
      {items.split(' ').map((t, i) => {
        if (t === '|') return <Handle key={i} />;
        if (t === '/') return <div key={i} className="flex w-[7px] items-center justify-center"><div className="h-7 w-px bg-[#cfcfcf]" /></div>;
        if (t === 'v' || t === '-v')
          return <div key={i} className="flex w-3 items-center justify-center"><Tri c={t === 'v' ? '#4a4a4a' : '#aaa'} s="w-[7px] h-[4px]" /></div>;
        const dim = t[0] === '-';
        const on = t[0] === '*';
        const small = t.endsWith('.');
        const n = t.replace(/^[-*]|\.$/g, '').replace(/\.$/, '');
        return (
          <div key={i} className="relative flex w-[33px] shrink-0 items-center justify-center">
            <div className={on ? 'flex h-[31px] w-8 items-center justify-center rounded-[2px] border border-[#b0b0b0] bg-[#dcdcdc]' : 'flex'}>
              <Icon n={n} dim={dim} s="size-[23px]" />
            </div>
            {small && <div className="absolute bottom-[7px] right-[3px] flex"><Tri s="w-[5px] h-[3px]" /></div>}
          </div>
        );
      })}
    </div>
  );
}

const menus: [string, string, string, string][] = [
  ['Pro', 'j', 'ekt', 'w-[51px]'], ['', 'E', 'dycja', 'w-12'], ['', 'W', 'idok', 'w-[48.500px]'], ['', 'W', 'arstwa', 'w-[58.500px]'],
  ['', 'U', 'stawienia', 'w-[71px]'], ['', 'W', 'tyczki', 'w-[55.500px]'], ['Wekt', 'o', 'r', 'w-[51.500px]'], ['', 'R', 'aster', 'w-[46px]'],
  ['', 'B', 'azy danych', 'w-[80.500px]'], ['W ', 'i', 'nternecie', 'w-[79.500px]'], ['Siatka', '', '', 'w-[45px]'], ['Pro', 'c', 'essing', 'w-[71.500px]'], ['', 'P', 'omoc', 'w-16'],
];

const Check = ({ on, dis }: { on?: boolean; dis?: boolean }) => (
  <div className={`flex size-3.5 shrink-0 items-center justify-center border border-[#b4b4b4] ${dis ? 'bg-[#f0f0f0]' : 'bg-white'}`}>
    {on && <svg viewBox="0 0 10 10" className="size-2.5"><path d="M1.500 5l2.500 3.500L8 .800" fill="none" stroke="#000" strokeWidth="1.700" /></svg>}
  </div>
);

function Scroll({ top, thumb, bottom }: { top: string; thumb: string; bottom: string }) {
  return (
    <div className="flex w-3.5 shrink-0 flex-col border-l border-[#b8b8b8] bg-[#e2e2e2]">
      <div className="flex h-3.5 shrink-0 items-center justify-center border-b border-[#b8b8b8] bg-[#f6f6f6]"><Tri dir="up" s="w-[7px] h-[4px]" /></div>
      <div className={`${top} shrink-0`} />
      <div className={`${thumb} shrink-0 border-b border-[#b8b8b8] bg-linear-to-r from-[#fefefe] to-[#f1f1f1]`} />
      <div className={bottom} />
      <div className="mt-auto flex h-3.5 shrink-0 items-center justify-center border-t border-[#b8b8b8] bg-[#f6f6f6]"><Tri s="w-[7px] h-[4px]" /></div>
    </div>
  );
}

const PanelTitle = ({ t }: { t: string }) => (
  <div className="flex h-5 shrink-0 items-center pl-1 pr-[2px] text-[11px]">
    <span className="grow">{t}</span>
    <svg viewBox="0 0 25 11" className="mr-px h-[11px] w-[25px]" fill="none" stroke="#6a6a6a">
      <rect x=".5" y=".5" width="10" height="10" rx="2" /><rect x="2.500" y="4.500" width="4" height="4" /><path d="M4.500 4V2.500h4v4H7" />
      <rect x="14.500" y=".5" width="10" height="10" rx="2" /><path d="M17 3l5 5M22 3l-5 5" strokeWidth="1.700" />
    </svg>
  </div>
);

const HDots = () => (
  <div className="flex h-[6px] shrink-0 items-center justify-center">
    <div className="flex gap-[2px]">{[0, 1, 2, 3, 4, 5].map(i => <div key={i} className="size-px bg-[#999]" />)}</div>
  </div>
);
const VDots = () => (
  <div className="flex flex-col gap-[2px]">{[0, 1, 2, 3, 4, 5].map(i => <div key={i} className="size-px bg-[#999]" />)}</div>
);

const tree: [string, string][] = [
  ['airports', 'pts'], ['builtups', 'poly'], ['majrivers', 'line'], ['popp', 'pts'], ['railroads', 'line'],
  ['regions', 'poly'], ['rivers', 'line'], ['swamp', 'poly'], ['trails', 'line'], ['trees', 'poly'],
];

function Browser() {
  return (
    <div className="flex h-[314px] shrink-0 flex-col">
      <PanelTitle t="Przeglądarka" />
      <div className="flex h-[30px] shrink-0 items-center pb-px pl-[3.500px]">
        {['addlayer', 'refresh', 'filter', 'collapse', 'info'].map(n => (
          <div key={n} className="flex w-[25px] justify-center"><Icon n={n} s="size-[15px]" /></div>
        ))}
      </div>
      <div className="flex h-[264px] shrink-0 border border-[#b2b2b2] bg-white">
        <div className="flex grow flex-col overflow-hidden [&_span]:mt-[2px]">
          <div className="flex h-[18px] shrink-0 items-center pl-5"><Tri s="w-[8px] h-[4px]" /><Icon n="conn" s="ml-2.5 h-2 w-[11px]" /><span className="ml-2">localhost</span></div>
          <div className="flex h-[18px] shrink-0 items-center pl-9"><Tri s="w-[8px] h-[4px]" /><Icon n="db" s="ml-2 size-[13px]" /><span className="ml-[7.500px]">public</span></div>
          {tree.map(([t, ic]) => (
            <div key={t} className={`flex h-[18px] w-[179px] shrink-0 items-center pl-[54px] ${t === 'swamp' ? 'bg-[#efefef]' : ''}`}>
              <Tri dir="right" /><Icon n={ic} s="ml-[9px] size-4" /><span className="ml-[6px]">{t}</span>
            </div>
          ))}
          {[['SAP HANA', 'hana'], ['MS SQL Server', 'mssql'], ['Oracle', 'oracle']].map(([t, ic]) => (
            <div key={t} className="flex h-[18px] shrink-0 items-center pl-[19px]"><Icon n={ic} s="size-4" /><span className="ml-[6px]">{t}</span></div>
          ))}
        </div>
        <Scroll top="h-[65px]" thumb="h-[104px] border-t" bottom="grow" />
      </div>
    </div>
  );
}

type Layer = [string, string, string, boolean, string?];
const layers: Layer[] = [
  ['Wierzchołki', 'dot', '#885c9a', true, 'on'], ['Uproszczona geometria', 'box', '#729b6f', true, 'cur'], ['Wierzchołki', 'dot', '#a5725a', true],
  ['swamp', 'box', '#91522d', false], ['Iloczyn', 'box', '#c43c39', true], ['BuforTrail', 'box', '#e15989', true], ['IloczynAirRail', 'box', '#987db7', true],
  ['BuforRail', 'box', '#b7484b', true], ['BuforAir', 'box', '#729b6f', true], ['wezly', 'dot', '#c43c39', false], ['Wierzchołki', 'dot', '#b2c93f', true],
  ['Bufor', 'pen', '#c43c39', true], ['railroads', 'line', '#e8909f', false], ['Iloczyn', 'line', '#ab82b8', true], ['popp', 'dot', '#c43c39', false],
  ['majrivers', 'line', '#b3a0ca', false], ['builtups', 'box', '#ff9e17', false], ['trails', 'line', '#ab82b8', false, 'on'], ['airports', 'dot', '#d3a02b', false],
];

function Layers() {
  return (
    <div className="flex h-[401px] shrink-0 flex-col">
      <PanelTitle t="Warstwy" />
      <div className="flex h-[38px] shrink-0 items-center pb-[2px] pl-2 [&>svg]:size-[15px]">
        <Icon n="broom" /><span className="w-2.5" /><Icon n="addgroup" /><span className="w-3.5" /><Icon n="eye" />
        <span className="flex w-[18px] justify-center self-end pb-[7px]"><Tri s="w-[5px] h-[3px]" /></span><Icon n="filter" />
        <span className="flex w-[19px] justify-center self-end pb-[7px]"><Tri s="w-[5px] h-[3px]" /></span><Icon n="epsf" />
        <span className="flex w-[26px] justify-center"><Tri s="w-[7px] h-[4px]" /></span><Icon n="expand" /><span className="w-2.5" /><Icon n="collapse" /><span className="w-2.5" /><Icon n="remove" />
      </div>
      <div className="flex h-[343px] shrink-0 border border-[#b2b2b2] bg-white">
        <div className="flex grow flex-col overflow-hidden">
          {layers.map(([t, k, c, mem, st], i) => (
            <div key={i} className={`flex h-[18px] shrink-0 items-center pl-[23px] pr-[5px] text-[11.300px] font-bold ${st === 'cur' ? 'bg-[#efefef]' : ''} ${st ? 'text-black' : 'italic text-[#808080]'}`}>
              <Check on={!!st} />
              <svg viewBox="0 0 16 16" className="ml-1.5 size-4 shrink-0">
                {k === 'dot' && <circle cx="8" cy="7.500" r="2.900" fill={c} stroke="#444" strokeWidth=".9" />}
                {(k === 'box' || k === 'pen') && <rect x=".5" y=".5" width="15" height="15" fill={c} stroke="#3d3030" strokeOpacity=".7" />}
                {k === 'pen' && <path d="M5 12l7-10" stroke="#f5a53a" strokeWidth="2.500" />}
                {k === 'pen' && <path d="M3 14l1.500-3" stroke="#eee" strokeWidth="2.500" />}
                {k === 'line' && <path d="M0 7h14" stroke={c} strokeWidth="2" />}
              </svg>
              <span className={`mt-[2px] grow leading-none ${k === 'line' ? 'ml-1' : 'ml-1.5'}`}><span className={st === 'cur' ? 'underline underline-offset-2' : ''}>{t}</span></span>
              {mem && <div className="mr-[2px] flex size-4 items-center justify-center border border-[#e2e2e2] bg-[#f8f8f8]"><Icon n="mem" s="size-3.5" /></div>}
              <div className="flex size-4 items-center justify-center border border-[#e2e2e2] bg-[#f8f8f8]">
                <svg viewBox="0 0 14 14" className="size-3.5"><circle cx="7" cy="7.500" r="5.500" fill="none" stroke="#c4c4c4" /><path d="M0 7.500h14" stroke="#ccc" /><path d="M3.800 4.800C4 .900 10.500 1.200 10.300 5c0 2.200-3.100 2-3.200 4.500M7.100 10.700v2.300" fill="none" stroke="#555" strokeWidth="2.200" /></svg>
              </div>
            </div>
          ))}
        </div>
        <Scroll top="h-0" thumb="h-[237px]" bottom="grow" />
      </div>
    </div>
  );
}

type Sheet = [number, number, number, number];
const A: Sheet = [300, 125, 2.529, 3];
const C: Sheet = [300, 480, 3, 3];
const D: Sheet = [900, 125, 2.45, 3];
const proj = (s: Sheet, pts: string) =>
  pts.split(' ').map(p => { const [x, y] = p.split(',').map(Number); return [s[0] + x / s[2], s[1] + y / s[3]]; });

const trails: [Sheet, string][] = [
  [A, '260,221 270,212 292,211'], [A, '338,205 350,185 362,168 372,164 385,182 398,189 410,191 420,180 428,162 440,148 447,135'],
  [A, '326,404 342,396 346,384 362,374 368,354 390,344 402,330 420,319 430,326 435,340 435,357'],
  [A, '885,505 896,490 900,472 914,450 920,430 938,412 950,402 965,388'],
  [A, '1208,418 1225,416 1270,402 1284,413 1298,409 1305,394 1318,388 1330,375 1360,360 1395,347 1418,342 1427,346 1440,335 1460,334 1475,318 1495,302 1515,294 1540,276 1568,265'],
  [A, '612,688 645,673 662,674 685,662 700,642 728,619 745,614 770,597 790,582 804,570'],
  [A, '572,676 576,695 573,715 560,744 552,755 546,770 530,788 515,808 500,815 470,819 462,818 450,822 440,817 428,820 415,817 390,818 381,803 366,813 340,838 310,875 295,886 272,886 266,906 252,915 236,936 203,938 196,948 187,934 145,932 135,942 125,964 113,972 109,983'],
  [A, '10,1015 28,1006 42,1018 60,1010 78,997'], [A, '103,1002 96,1014 98,1050 92,1080 97,1105 104,1140 102,1160 95,1180 88,1200'],
  [C, '112,0 109,14 117,40 125,75 115,110 105,130 94,170 109,203'],
  [C, '837,64 845,69 856,67 867,58 878,66 905,79 920,80 933,74 945,84 955,86'],
  [C, '698,366 693,345 699,322 735,311 735,290 755,282 780,260 785,243 803,232 850,222 852,211 870,203 880,189 890,196 910,198 915,190 924,194 925,210 914,240 910,256 880,262 860,274 848,265 838,248 810,245 803,232'],
  [C, '925,210 940,210 955,202'], [C, '510,365 522,375 532,395 560,391 592,396 605,412 625,452 645,468 667,467'],
  [C, '474,496 500,489 536,486 520,499 498,516 470,544 461,570'],
  [C, '547,621 565,612 600,602 638,580 665,576 700,558 745,547 770,534 785,530 805,512 815,502 823,490 828,510 838,540 856,575 853,618 838,628 800,631'],
  [C, '595,629 604,629 613,637 617,655 613,664 628,676 680,685 718,678'],
  [C, '271,816 285,788 298,769 328,755 342,765 356,765 342,776 334,790 335,817'],
  [D, '186,108 193,120 208,128 220,142 237,156 239,178 231,208 237,218 230,232 221,243'],
  [D, '0,294 25,275 50,264 65,265 70,269 75,262 92,253'], [D, '540,242 555,229 577,217 585,202 600,182 607,162 618,146 623,132 628,127'],
  [D, '557,504 568,487 585,465 600,456'],
];
const swamps: [Sheet, string][] = [
  [A, '395,112 395,122 408,126 M 438,128 450,122 452,110'], [A, '321,185 318,200 306,215 304,228 318,232 332,230 318,240 316,258'],
  [A, '735,108 748,122 765,132 785,128 800,125 798,112 775,118 M 775,140 768,158 782,165 770,180 774,196'],
  [A, '1418,200 1424,186 1445,165 1460,150 1475,165 1505,160 1508,175 1480,185 1450,185 1432,195 1418,205 M 1440,190 1480,190 1500,185 M 1445,172 1480,175 1500,170 M 1505,180 1505,198 1494,225'],
  [C, '523,75 553,78 M 515,90 518,105 550,108 545,125 520,130 520,155 550,148 575,140 555,162 585,170 600,180 625,178 648,200 625,205 600,200 575,210 565,235 590,225 625,215 640,240 630,260 M 605,190 615,230 M 580,215 570,260 M 605,210 640,225 M 530,85 535,155 M 565,240 555,265 562,280'],
  [C, '757,605 755,620 785,615 795,625 785,640 760,640 745,655 770,660 785,668 M 755,610 760,640 M 775,620 765,665 M 790,620 778,665 M 725,668 750,680 745,695 730,705 715,713 735,720 742,708'],
  [D, '900,120 898,135 905,155 925,150 920,125 940,135 945,155 945,175 965,165 975,155 990,145 1000,155 1020,140 1030,145 1045,145 1060,135 1050,120 1075,115 1100,118 1130,112 1165,118 1165,140 1135,125 1135,150 1125,180 M 1088,158 1078,175 1080,190 1095,180 1110,195 1095,205 1120,205'],
  [D, '1415,135 1420,145 1440,155 1450,165 1462,180 1480,175 1482,190 1465,200 M 1422,188 1440,200 1455,206'],
];

function dots(): [number, number][] {
  const out: [number, number][] = [];
  let seed = 7;
  const rnd = () => { seed = (seed * 16807) % 2147483647; return seed / 2147483647 - 0.5; };
  for (const [s, d] of swamps)
    for (const seg of d.split(' M ')) {
      const p = proj(s, seg);
      for (let i = 0; i + 1 < p.length; i++) {
        const n = Math.max(1, Math.round(Math.hypot(p[i + 1][0] - p[i][0], p[i + 1][1] - p[i][1]) / 1.3));
        for (let k = 0; k < n; k++)
          out.push([p[i][0] + ((p[i + 1][0] - p[i][0]) * k) / n + rnd() * 3.2, p[i][1] + ((p[i + 1][1] - p[i][1]) * k) / n + rnd() * 3.2]);
      }
      out.push(p[p.length - 1] as [number, number]);
    }
  return out;
}

function MapView() {
  return (
    <svg viewBox="304 161 1524 591" className="h-[591px] w-[1524px]">
      <g fill="#729b6f" stroke="#3c4b3b">
        <path d="M460 158h20l-4 10h-10zM604 158h22l-6 10h-10zM1287 158h24l-4 14-14 6-8-8zM1315 165h26l-12 10zM1480 178l10 4 4 14-12-4zM878 182h14v8h-12z" />
      </g>
      <g fill="none" stroke="#a27db0" strokeWidth="1.150">
        {trails.map(([s, d], i) => <polyline key={i} points={proj(s, d).map(p => p.join(',')).join(' ')} />)}
      </g>
      <g fill="#885c9a" stroke="#35253b" strokeWidth="1.200">
        {dots().map(([x, y], i) => <circle key={i} cx={x} cy={y} r="3.900" />)}
      </g>
    </svg>
  );
}

const XMark = () => (
  <svg viewBox="0 0 12 12" className="size-3"><path d="M1 1.500c4 2 7 6 9.500 9.500M11 .500C7 4 4 8 1 11" stroke="#222" strokeWidth="2" fill="none" /></svg>
);

const log: [string, string, string, string][] = [
  ['21:24:58', 'INFO', 'Executing algorithm ', 'Wydobądź wierzchołki'], ['21:24:58', 'SUCCESS', 'Wydobądź wierzchołki completed', ''],
  ['21:36:44', 'WARNING', 'Niepoprawny lub brakujący', ''], ['21:36:52', 'INFO', 'Executing algorithm ', 'Wydobądź wierzchołki'],
  ['21:36:52', 'SUCCESS', 'Wydobądź wierzchołki completed', ''], ['21:37:14', 'INFO', 'Executing algorithm ', 'Przetwórz na'],
  ['21:37:14', 'SUCCESS', 'Przetwórz na wieloczęściowe', ''], ['21:38:27', 'INFO', 'Executing algorithm ', 'Przetwórz na'],
];

const Logo = () => (
  <svg viewBox="0 0 16 16" className="size-4 shrink-0"><circle cx="7.700" cy="7.700" r="5.900" fill="none" stroke="#76a82c" strokeWidth="3.200" /><path d="M9 9l6 6.500" stroke="#fff" strokeWidth="4.600" /><path d="M9.800 9.800l5 5.200" stroke="#589632" strokeWidth="3.200" /><circle cx="8.200" cy="8.200" r="1.900" fill="#ee9a43" /></svg>
);

const areas = ['1263,08', '489,739', '106,636', '230,417', '151,251', '350,414', '164,443', '207,046', '108,921', '198,646', '348,054', '104,24', '319,453', '198,381', '135,838', '230,801', '246,26', '257,743'];

function AttributeTable() {
  const tools = 'pencil,-multiedit,-saveedit,/,-newrow,-trash,-cut,-copy,-paste,/,selexpr,rows,invert,deselone,filter,movetop,panrow,zoomrow,/,-col,-col,calcedit,abacus,/,cond,/,dock'.split(',');
  return (
    <div className="absolute left-[617px] top-[293px] flex h-[640px] w-[1118px] flex-col border border-[#9a9a9a] bg-[#f0f0f0]">
      <div className="flex h-[30px] shrink-0 items-center bg-white pl-2 text-[11.370px] text-[#999]"><Logo /><span className="ml-2">Uproszczona geometria — Łącznie obiektów: 69, odfiltrowanych: 69, wybranych: 0</span></div>
      <div className="flex h-[31px] shrink-0 items-center pb-px pl-[3px]">
        {tools.map((t, i) => t === '/'
          ? <div key={i} className="flex w-2 justify-center"><div className="h-3 w-px bg-[#cfcfcf]" /></div>
          : <div key={i} className="flex w-[24.960px] justify-center"><Icon n={t.replace('-', '')} dim={t[0] === '-'} s="size-4" /></div>)}
      </div>
      <div className="flex h-[543px] shrink-0 border-y border-[#b2b2b2] bg-white">
        <div className="grow overflow-hidden">
          <div className="flex h-[19px] items-stretch border-b border-[#a8a8a8] bg-[#f0f0f0] leading-[19px]">
            <div className="w-[19px] bg-[#f8f8f8]" />
            {['gid', 'cat', 'f_codedesc', 'f_code', 'areakm2'].map(h => <div key={h} className="w-[100px] border-r border-[#c2c2c2] bg-linear-to-b from-white to-[#efefef] text-center">{h}</div>)}
          </div>
          {areas.map((a, i) => (
            <div key={i} className="flex h-[30px] leading-[29px]">
              <div className="w-[19px] border-b border-r border-[#a8a8a8] bg-linear-to-r from-white to-[#efefef] pl-[3px] leading-[30px]">{i + 1}</div>
              <div className={`flex [&>div]:w-[100px] [&>div]:border-b [&>div]:border-r [&>div]:border-[#c0c0c0] ${i % 2 ? 'bg-[#e8e7e3]' : 'bg-white'}`}>
                <div className="pr-[3px] text-right">{i + 1}</div><div className="pr-[3px] text-right">{i + 1}</div>
                <div className="pl-[3px]">Marsh/Swamp</div><div className="pl-[3px]">BH095</div><div className="pr-[3px] text-right">{a}</div>
              </div>
            </div>
          ))}
        </div>
        <Scroll top="h-[19px]" thumb="h-[200px]" bottom="grow" />
      </div>
      <div className="flex grow items-start pl-[3px] pr-[3px] pt-[3px]">
        <div className="flex h-[26px] w-[148px] items-center rounded-[3px] border border-[#ababab] bg-linear-to-b from-white to-[#f0f0f0] pl-[3px] text-[10.800px] tracking-[-0.3px]"><Icon n="table" s="size-4" /><span className="ml-px">pokaż wszystkie obiekty</span></div>
        <div className="grow" />
        <div className="flex pr-[5px] pt-[5px]"><Icon n="form" s="size-3.5" /></div>
        <div className="flex h-6 w-6 justify-center rounded-[2px] border border-[#aaa] bg-[#dadada] pt-1"><Icon n="table" s="size-3.5" /></div>
      </div>
    </div>
  );
}

const btn = 'flex items-center justify-center rounded-[3px] border border-[#b4b4b4] bg-linear-to-b from-white to-[#f2f2f2]';

function Spin({ v, dis }: { v: string; dis?: boolean }) {
  return (
    <div className={`flex h-5 w-[85px] rounded-[2px] border border-[#ababab] ${dis ? 'bg-[#efefef] text-[#8a8a8a]' : 'bg-white'}`}>
      <span className="grow pl-1 leading-[18px]">{v}</span>
      <div className="flex w-3.5 flex-col items-center justify-center gap-[3px] border-l border-[#ababab] bg-[#f4f4f4]"><Tri dir="up" c="#999" s="w-[7px] h-[4px]" /><Tri c={dis ? '#999' : '#555'} s="w-[7px] h-[4px]" /></div>
    </div>
  );
}

const groups = ['Data i czas', 'Funkcje agregujące', 'General', 'Geometria', 'Kolor', 'Konwersja', 'Luźne dopasowywanie', 'Mapy wartości', 'Matematyczne', 'Operatory', 'Pliki i ścieżki', 'Pola i wartości', 'Rastry'];

function Calculator() {
  return (
    <div className="absolute left-[1209px] top-[194px] flex h-[656px] w-[640px] flex-col border border-[#6b6b6b] bg-[#f0f0f0] text-[10.800px] tracking-[-0.3px]">
      <div className="flex h-[30px] shrink-0 items-center bg-white pl-2 text-[11.250px] tracking-normal"><Logo /><span className="ml-[5.500px]">Uproszczona geometria — Kalkulator pól</span></div>
      <div className="flex h-[43px] shrink-0 items-center pb-[2px] pl-[11px] tracking-[-0.15px] text-[#8a8a8a]"><Check dis /><span className="ml-1 mt-px">Only update 0 selected features</span></div>
      <div className="-mt-[7px] flex shrink-0 gap-[7px] pl-3">
        <div className="w-[409px] shrink-0">
          <div className="flex h-[18px] items-start font-bold"><Check on /><span className="ml-[5px] mt-px text-[11.200px] leading-4 tracking-[0.050px]">Twórz nowe pole</span></div>
          <div className="flex h-[109px] flex-col rounded-[2px] border border-[#d4d4d4] bg-[#ebebeb] pl-1 pr-[5px] pt-3">
            <div className="flex h-[15px] items-center"><Check /><span className="ml-1 mt-px">Twórz pole wirtualne</span></div>
            <div className="mt-[5px] flex h-[22px] items-center"><span className="mt-[2px] w-[131px]">Nazwa</span><div className="h-[22px] grow rounded-[2px] border border-[#ababab] bg-white" /></div>
            <div className="mt-[3px] flex h-6 items-center"><span className="mt-[2px] w-[131px]">Typ pola wyjściowego</span>
              <div className="flex h-6 grow items-center rounded-[3px] border border-[#ababab] bg-linear-to-b from-white to-[#f0f0f0] pl-[5px] pr-[7px]"><span className="mb-[2px] w-[18px] text-[9.500px] font-bold leading-[10px] tracking-[-0.2px] text-[#555]">123</span><span className="mt-[2px] grow tracking-[-0.180px]">Liczba całkowita (integer)</span><Tri s="w-[7px] h-[4px]" /></div>
            </div>
            <div className="mt-1 flex h-5 items-center"><span className="w-[131px]">Długość pola wyjściowego</span><Spin v="10" /><span className="ml-[5px] w-[92px]">Precyzja</span><Spin v="3" dis /></div>
          </div>
        </div>
        <div className="grow">
          <div className="flex h-[18px] items-start font-bold"><Check /><span className="ml-[5px] mt-px text-[11.200px] leading-4 tracking-[0.050px]">Aktualizuj istniejące pole</span></div>
          <div className="h-[109px] rounded-[2px] border border-[#d4d4d4] bg-[#ebebeb] pl-1 pt-[45px]"><div className="h-6 rounded-[3px] border border-[#c0c0c0] bg-linear-to-b from-white to-[#f0f0f0]" /></div>
        </div>
      </div>
      <div className="mt-[6px] flex h-[25px] shrink-0 items-end border-b border-[#b8b8b8] pl-[11px]">
        <div className="-mb-px h-[25px] w-[76px] rounded-t-[3px] border border-b-0 border-[#b4b4b4] bg-white pr-px text-center leading-[24px]">Wyrażenie</div>
        <div className="h-[22px] w-[90px] rounded-t-[3px] border border-b-0 border-l-0 border-[#b4b4b4] bg-[#e6e6e6] pr-[2px] text-center leading-[22px]">Edytor funkcji</div>
      </div>
      <div className="mt-[9px] flex h-[287px] shrink-0 pl-5">
        <div className="w-[257px] shrink-0">
          <div className="flex h-[22px] gap-[2px]">
            {['new', 'save', '-editfn', '-trash', 'load', 'export'].map(n => <div key={n} className={`${btn} w-6 ${n[0] === '-' ? 'opacity-70' : ''}`}><Icon n={n.replace('-', '')} dim={n[0] === '-'} s="size-4" /></div>)}
          </div>
          <div className="mt-[7px] h-[179px] border border-[#b4b4b4] bg-white p-px">
            <div className="h-[17px] bg-[#efefef] font-['Liberation_Mono',monospace] text-[13.350px] leading-[17px] tracking-normal text-[#4a7ebb]">sum<span className="inline-block h-[17px] bg-[#b6fb00] align-top text-[#333]">(</span>areakm2<span className="inline-block h-[17px] bg-[#b6fb00] align-top text-[#333]">)</span></div>
          </div>
          <div className="mt-[6px] flex h-[21px] gap-[2px] text-[12px]">
            {['=', '+', '-', '/', '*', '^', '||', '(', ')', "'\\n'"].map(o => <div key={o} className={`${btn} w-6 last:w-[23px]`}>{o}</div>)}
          </div>
          <div className="mt-[9px] flex h-[23px] items-center">
            <span className="w-[37px]">Obiekt</span>
            <div className="flex h-[22px] w-[160px] rounded-[2px] border border-[#ababab] bg-white pl-[2px]"><span className="grow leading-5">Marsh/Swamp</span><div className="flex w-5 items-center justify-center border-l border-[#ababab] bg-[#fafafa]"><Tri s="w-[7px] h-[5px]" /></div></div>
            <div className={`${btn} ml-[6px] h-[23px] w-6`}><svg viewBox="0 0 12 14" className="h-3.5 w-3"><path d="M11 1v12L1 7z" fill="#ddd" stroke="#bbb" /></svg></div>
            <div className={`${btn} ml-[6px] h-[23px] w-6`}><svg viewBox="0 0 12 14" className="h-3.5 w-3"><path d="M1 1v12l10-6z" fill={B} stroke={DB} /></svg></div>
          </div>
          <div className="mt-[5px] flex h-4 items-center"><span className="w-[48px]">Podgląd:</span><span className="tracking-normal">24719,761</span></div>
        </div>
        <div className="flex w-[22px] shrink-0 items-center justify-center"><VDots /></div>
        <div className="w-[193px] shrink-0">
          <div className="flex h-[22px] justify-between">
            <div className="flex w-[107px] items-center rounded-[2px] border border-[#b4b4b4] bg-white pl-[7px] text-[#777]"><svg viewBox="0 0 14 14" className="size-[13px]" fill="none" stroke="#777" strokeWidth="1.400"><circle cx="5.500" cy="5.500" r="4" /><path d="M8.500 8.500l5 5" /></svg><span className="ml-[7px] mt-px tracking-normal">Szukaj...</span></div>
            <div className={`${btn} h-[22px] w-20 text-[#777]`}>Pokaż pomoc</div>
          </div>
          <div className="mt-[6px] flex h-[259px] border border-[#b4b4b4] bg-white text-[11.250px] tracking-normal">
            <div className="grow overflow-hidden leading-[15px]">
              {['feature', 'geometry', 'id', 'row_number'].map(f => <div key={f} className="h-[15px] pl-[23px] font-bold">{f}</div>)}
              {groups.map(g => <div key={g} className="flex h-[15px] items-center pl-2"><Tri dir="right" /><span className="ml-2 grow bg-[#c1c1c1] pl-[3px]">{g}</span></div>)}
            </div>
            <Scroll top="h-0" thumb="h-[162px]" bottom="grow" />
          </div>
        </div>
        <div className="flex w-[13px] shrink-0 items-center pl-0.5"><VDots /></div>
        <div className="h-[287px] grow border border-[#b4b4b4] bg-white" />
      </div>
      <div className="mt-[38px] flex h-[34px] shrink-0 pl-5">
        <svg viewBox="0 0 33 33" className="h-[33px] w-[33px] shrink-0"><path d="M17.500 3a14 12 0 0 1 4 23v6.500l-6-6A14 12 0 0 1 17.500 3z" fill="#999" /><path d="M15.500 1.500a14.500 12 0 0 1 3.500 23.600v5.400l-5-5a14.500 12 0 0 1 1.500-24z" fill="#fff" stroke="#555" /><text x="11.500" y="20.500" fontSize="22" fontWeight="700" fontFamily="Liberation Serif, serif" fill="#00f">i</text></svg>
        <div className="ml-[36.500px] mt-1 shrink-0 whitespace-nowrap leading-[13px] tracking-[-0.26px]">Edytujesz informacje w tej warstwie, ale nie znajduje się ona w trybie edycji. Jeśli klikniesz OK, zostanie automatycznie<br />edycji.</div>
      </div>
      <div className="mt-[30px] flex h-[21px] shrink-0 gap-[6px] pl-[503px]"><div className={`${btn} w-20 shrink-0 text-[#8a8a8a]`}>OK</div><div className={`${btn} w-20 shrink-0`}>Anuluj</div></div>
    </div>
  );
}

export default function App() {
  return (
    <div className="relative flex h-[917px] w-[1828px] flex-col overflow-hidden whitespace-nowrap bg-[#f0f0f0] font-['Open_Sans','Noto_Sans',sans-serif] text-[11.400px] leading-4 text-black">
      <div className="flex h-[14px] shrink-0 items-end border-b border-[#d0d0d0] pl-2.5 text-[11.400px] text-[#8f8f8f]">
        {menus.map(([a, u, b, w]) => <div key={a + u + b} className={`${w} -translate-y-px leading-4`}>{a}<span className="underline underline-offset-2">{u}</span>{b}</div>)}
      </div>
      <Toolbar items="new open save layout layoutmgr style | *hand -pansel zin zout zfull -zsel zlayer -znat zlast -znext mapview map3d bookmarknew bookmark clock refresh | identify abacus gear sum table v ruler v tip -action -v" />
      <Toolbar items="dsm geopkg shp feather chip mesh gpx | edits. pencil -saveedit -seg -v -addpoly -vertex -v -multiedit -trash -cut -copy -paste -undo -redo | label diagram / pin redlabel / -lpin -leye -lmove -lrot -ledit | meta | python | help |" />
      <Toolbar items="selfeat v selval v desel v selloc v | -meshedit -meshsel -v -meshx -meshf -v | annol v annosel annopoly annoline annostar annotext annoabc / textann v | gps -gpsc / gpsmap. -gpsadd gpspoly -gpsdash / info wrench" />
      <div className="flex grow overflow-hidden">
        <div className="flex w-[297px] shrink-0 flex-col">
          <Browser />
          <HDots />
          <Layers />
          <HDots />
          <PanelTitle t="Edytor węzłów" />
          <div className="-mt-px flex h-[24px] shrink-0 justify-end"><div className={`${btn} w-6 flex-col gap-[3px]`}><i className="h-px w-2.5 bg-[#444]" /><i className="h-px w-2.5 bg-[#444]" /><i className="h-px w-2.5 bg-[#444]" /></div></div>
          <div className="mt-[5px] flex justify-end"><div className="flex h-3.5 w-3.5 items-center justify-center border border-[#b8b8b8] bg-[#f6f6f6]"><Tri dir="up" s="w-[7px] h-[4px]" /></div></div>
        </div>
        <div className="flex w-[6px] shrink-0 items-center justify-center pb-[240px]"><VDots /></div>
        <div className="flex grow flex-col">
          <div className="flex h-[30px] shrink-0 items-center border border-[#85a07d] bg-[#dff0d8] pl-2.5 text-[11.200px]">
            <svg viewBox="0 0 24 20" className="h-[18px] w-6"><path d="M1 4c3 2 5 5 6 8C11 7 16 3 23 1 16 6 11 12 8 19 6 13 4 8 1 4z" fill="#2fd02f" stroke="#0a7a12" strokeWidth="1.200" /></svg>
            <span className="ml-[9px] mt-px font-bold tracking-[-0.05px]">Warstwa wyeksportowana:</span><span className="ml-[3px] mt-px tracking-[-0.36px]">Zapisano warstwę wektorową do</span><span className="ml-[3px] mt-px text-[#2f8a0c] underline">wezly.shp</span>
          </div>
          <div className="flex h-[592px] shrink-0 border border-t-0 border-[#b2b2b2] bg-white"><MapView /></div>
          <div className="flex h-[25px] shrink-0 items-center pl-1 pt-[7px] text-[11px]">Komunikaty</div>
          <div className="flex h-[30px] shrink-0 items-end text-[11px] tracking-[-0.2px]">
            {[['Wtyczki', 'w-[85px]'], ['Ogólne', 'w-[82px]'], ['Komunikaty', 'w-[103px]'], ['PostGIS', 'w-24']].map(([t, w], i) => (
              <div key={t} className={`${w} flex items-center gap-[7px] rounded-t-[3px] border border-b-0 border-[#b4b4b4] pl-2.5 ${i === 2 ? 'h-[30px] bg-white' : 'h-7 bg-[#e6e6e6]'}`}>{t}<XMark /></div>
            ))}
          </div>
          <div className="grow border border-[#b4b4b4] bg-white p-px">
            <div className="h-full border border-[#c4c4c4] pl-1 text-[10.800px] leading-[13px] tracking-[-0.05px]">
              {log.map(([h, l, m, it], i) => (
                <div key={i} className="flex h-[13px]">
                  <span className={`w-[120.500px] ${l === 'WARNING' ? 'text-[#e58a13]' : ''}`}>2023-11-13T{h}</span>
                  <span className={`mr-3 ${l === 'WARNING' ? 'tracking-[-0.2px] text-[#e58a13]' : ''}`}>{l}</span>
                  <span className="-ml-px tracking-[-0.38px]">{m}<em>{it}</em></span>
                </div>
              ))}
            </div>
          </div>
        </div>
      </div>
      <AttributeTable />
      <Calculator />
    </div>
  );
}
